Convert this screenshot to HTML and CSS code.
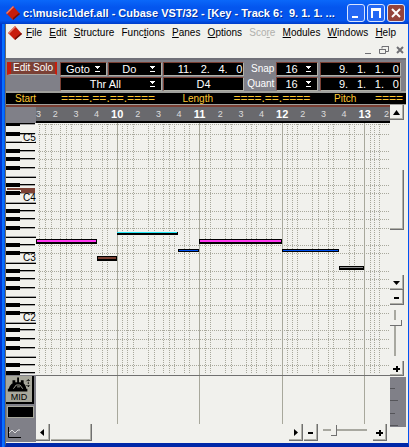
FILE: index.html
```
<!DOCTYPE html>
<html lang="en">
<head>
    <meta charset="UTF-8">
    <meta name="viewport" content="width=device-width, initial-scale=1.0">
    <title>Cubase VST/32</title>
    <link rel="stylesheet" href="styles.css">
</head>
<body>
    <div class="window">
        <header class="titlebar">
            <svg class="logo" viewBox="0 0 14 14"><path d="M7 0L14 8L7 14L0 7Z" fill="#c81c0c"/><path d="M0 7L7 0L8 1L1 8Z" fill="#e88070"/><path d="M7 14L14 8L13 7L7 12Z" fill="#701008"/></svg>
            <h1>c:\music1\def.all - Cubase VST/32 - [Key - Track 6:&nbsp; 9. 1. 1. ...</h1>
            <div class="caption">
                <button type="button" aria-label="Minimize"><svg viewBox="0 0 16 16"><path d="M4 11h6v2H4z" fill="#fff"/></svg></button>
                <button type="button" aria-label="Maximize"><svg viewBox="0 0 16 16"><path d="M3 3h10v10h-2V6H5v7H3z" fill="#fff"/></svg></button>
                <button type="button" class="close" aria-label="Close"><svg viewBox="0 0 16 16"><path d="M4 4L12 12M12 4L4 12" stroke="#fff" stroke-width="2"/></svg></button>
            </div>
        </header>

        <nav class="menu">
            <svg class="logo" viewBox="0 0 14 14"><path d="M7 0L14 8L7 14L0 7Z" fill="#c81c0c"/><path d="M0 7L7 0L8 1L1 8Z" fill="#e88070"/><path d="M7 14L14 8L13 7L7 12Z" fill="#701008"/></svg>
            <div class="items">
                <button type="button"><u>F</u>ile</button>
                <button type="button"><u>E</u>dit</button>
                <button type="button"><u>S</u>tructure</button>
                <button type="button">Func<u>t</u>ions</button>
                <button type="button"><u>P</u>anes</button>
                <button type="button"><u>O</u>ptions</button>
                <button type="button" disabled>Sco<u>r</u>e</button>
                <button type="button"><u>M</u>odules</button>
                <button type="button"><u>W</u>indows</button>
                <button type="button"><u>H</u>elp</button>
            </div>
        </nav>
        <div class="mdi">
            <button type="button" aria-label="Minimize document"><svg viewBox="0 0 10 10"><path d="M2 8h6v1H2z" fill="#707074"/></svg></button>
            <button type="button" aria-label="Restore document"><svg viewBox="0 0 10 10"><path d="M3 3.500V1.500H9.500V6.500H7M0.500 4.500H6.500V8.500H0.500Z" fill="none" stroke="#707074"/><path d="M3 1h7v1H3zM0 4h7v1H0z" fill="#707074"/></svg></button>
            <button type="button" aria-label="Close document"><svg viewBox="0 0 10 10"><path d="M2 2L8 8M8 2L2 8" stroke="#707074" stroke-width="2"/></svg></button>
        </div>

        <div class="toolbar">
            <button type="button" class="solo">Edit Solo</button>
            <div class="fields">
                <div class="pick"><select aria-label="Goto"><option>Goto</option></select><svg viewBox="0 0 5 6"><path d="M0 0h5v1H0zM1 1h3v1H1zM2 2h1v1H2zM0 5h5v1H0z" fill="#fff"/></svg></div>
                <div class="pick"><select aria-label="Do"><option>Do</option></select><svg viewBox="0 0 5 6"><path d="M0 0h5v1H0zM1 1h3v1H1zM2 2h1v1H2zM0 5h5v1H0z" fill="#fff"/></svg></div>
                <div class="pos"><span>11.</span><span>2.</span><span>4.</span><span>0</span></div>
                <div class="pick wide"><select aria-label="Target"><option>Thr All</option></select><svg viewBox="0 0 5 6"><path d="M0 0h5v1H0zM1 1h3v1H1zM2 2h1v1H2zM0 5h5v1H0z" fill="#fff"/></svg></div>
                <div class="pos note">D4</div>
            </div>
            <div class="quant">
                <label for="snap">Snap</label>
                <div class="pick"><select id="snap"><option>16</option></select><svg viewBox="0 0 5 6"><path d="M0 0h5v1H0zM1 1h3v1H1zM2 2h1v1H2zM0 5h5v1H0z" fill="#fff"/></svg></div>
                <div class="pos"><span>9.</span><span>1.</span><span>1.</span><span>0</span></div>
                <label for="quant">Quant</label>
                <div class="pick"><select id="quant"><option>16</option></select><svg viewBox="0 0 5 6"><path d="M0 0h5v1H0zM1 1h3v1H1zM2 2h1v1H2zM0 5h5v1H0z" fill="#fff"/></svg></div>
                <div class="pos"><span>9.</span><span>1.</span><span>1.</span><span>0</span></div>
            </div>
        </div>

        <div class="info">
            <span>Start</span><b>====.==.==.====</b>
            <span>Length</span><b>====.==.====</b>
            <span>Pitch</span><b>====</b>
        </div>

        <main class="editor">
            <aside class="left">
                <div class="corner"></div>
                <svg class="keys" id="keys" viewBox="0 0 30 252" preserveAspectRatio="none"></svg>
                <div class="tools">
                    <button type="button" class="ctrl" aria-label="Controller type">
                        <svg viewBox="0 0 28 16"><path d="M3 14C3 8 7 6 9 5H17C20 6 22 9 22 14Z" fill="#000"/><path d="M12 0h2v6h-2zM7 3h3v3H7zM16 3h3v3h-3zM2 12h21v3H2z" fill="#000"/><path d="M8 12L11 8H15L18 12M12 10h3" fill="none" stroke="#a8a89c"/><path d="M24 2v8M22 4l2-2 2 2M22 8l2 2 2-2" fill="none" stroke="#000" stroke-dasharray="2 1"/></svg>
                        <span>MID</span>
                    </button>
                    <div class="value"></div>
                    <svg class="graph" viewBox="0 0 14 11"><path d="M0.500 0V10.500H13" fill="none" stroke="#000"/><path d="M1 6L4 3L7 6L10 3H12" fill="none" stroke="#ddd"/></svg>
                </div>
            </aside>

            <section class="center">
                <div class="ruler">
                    <span>3</span><span>2</span><span>3</span><span>4</span><b>10</b><span>2</span><span>3</span><span>4</span><b>11</b><span>2</span><span>3</span><span>4</span><b>12</b><span>2</span><span>3</span><span>4</span><b>13</b><span>2</span>
                </div>
                <svg class="roll" id="roll" viewBox="0 0 354 301" preserveAspectRatio="none"></svg>
                <div class="hscroll">
                    <button type="button" class="bevel" aria-label="Scroll left"><svg viewBox="0 0 9 9"><path d="M6 1V8L2 4.500Z"/></svg></button>
                    <div class="thumb"></div>
                    <button type="button" class="bevel" aria-label="Scroll right"><svg viewBox="0 0 9 9"><path d="M3 1V8L7 4.500Z"/></svg></button>
                    <button type="button" class="bevel" aria-label="Zoom out"><svg viewBox="0 0 9 9"><path d="M2 4h5v2H2z"/></svg></button>
                    <input type="range" class="hzoom" aria-label="Horizontal zoom" min="0" max="100" value="22">
                    <button type="button" class="bevel" aria-label="Zoom in"><svg viewBox="0 0 9 9"><path d="M1 4h7v2H1zM4 2h2v6H4z"/></svg></button>
                </div>
            </section>

            <aside class="right">
                <button type="button" class="bevel" aria-label="Scroll up"><svg viewBox="0 0 9 9"><path d="M1 7H8L4.500 2Z"/></svg></button>
                <div class="vtrack"><div class="thumb"></div></div>
                <button type="button" class="bevel" aria-label="Scroll down"><svg viewBox="0 0 9 9"><path d="M1 3H8L4.500 7Z"/></svg></button>
                <button type="button" class="bevel" aria-label="Zoom out"><svg viewBox="0 0 9 9"><path d="M2 4h5v2H2z"/></svg></button>
                <input type="range" class="vzoom" aria-label="Vertical zoom" min="0" max="100" value="26">
                <button type="button" class="bevel" aria-label="Zoom in"><svg viewBox="0 0 9 9"><path d="M1 4h7v2H1zM4 2h2v6H4z"/></svg></button>
                <div class="scale"><i></i><i></i><i></i><i></i></div>
            </aside>
        </main>
    </div>
    <script src="script.js"></script>
</body>
</html>
```
FILE: styles.css
```
*{
    box-sizing: border-box;
}
body{
    margin: 0;
    font-family: "Liberation Sans", Arial, sans-serif;
    font-size: 10px;
    background-color: #f1f1ed;
}
button{
    margin: 0;
    padding: 0;
    border: 0;
    background: none;
    font: inherit;
    color: inherit;
}
h1{
    margin: 0;
}
svg{
    display: block;
}
.window{
    min-height: 100vh;
    display: flex;
    flex-direction: column;
    border-left: 1px solid #6c6c64;
    border-right: 1px solid #0054f0;
    border-bottom: 4px solid #0028a8;
    margin-left: 5px;
    padding-right: 2px;
    background-color: #f1f1ed;
    box-shadow: -1px 0 #0058f0, -3px 0 #0870ff, -5px 0 #0034d0;
}
.titlebar{
    height: 24px;
    margin: 0 -3px 0 -6px;
    padding: 2px 4px 0 6px;
    display: flex;
    align-items: center;
    gap: 3px;
    background: linear-gradient(#0a68fa, #0456ee 30%, #0456ee 85%, #003cc8);
    color: #fff;
}
.titlebar h1{
    flex: 1;
    font-size: 11px;
    line-height: 14px;
    white-space: nowrap;
    overflow: hidden;
    text-shadow: 1px 1px #0030a0;
}
.logo{
    width: 14px;
    height: 14px;
    flex: none;
}
.caption{
    display: flex;
    gap: 2px;
}
.caption button{
    width: 18px;
    height: 18px;
    border: 1px solid #d8e4ff;
    border-radius: 3px;
    background-color: #2468f4;
}
.caption .close{
    background-color: #94443c;
}
.menu{
    height: 17px;
    padding: 1px 10px 0 2px;
    display: flex;
    align-items: center;
    gap: 4px;
}
.items{
    flex: 1;
    display: flex;
    justify-content: space-between;
}
.menu button{
    color: #000;
    line-height: 14px;
}
.menu button:disabled{
    color: #b0b0ac;
}
.mdi{
    height: 17px;
    padding-right: 1px;
    display: flex;
    align-items: center;
    justify-content: flex-end;
    gap: 6px;
}
.mdi svg{
    width: 10px;
    height: 10px;
}
.toolbar{
    height: 33px;
    padding: 2px 5px 1px 1px;
    border-top: 2px solid #707078;
    display: flex;
    gap: 2px;
    background-color: #808088;
    color: #fff;
}
.solo{
    width: 50px;
    height: 13px;
    margin-right: 1px;
    line-height: 12px;
    border-left: 4px solid #c81c0c;
    border-right: 2px solid #c81c0c;
    border-bottom: 1px solid #a8a8a4;
    background-color: #7b4034;
    white-space: nowrap;
}
.fields, .quant{
    display: grid;
    gap: 1px;
}
.fields{
    flex: 186;
    grid-template-columns: 47fr 54fr 82fr;
}
.quant{
    flex: 156;
    grid-template-columns: 28px 43fr 84fr;
    column-gap: 2px;
}
.quant label{
    font-size: 10px;
    line-height: 14px;
    text-align: right;
}
.wide{
    grid-column: span 2;
}
.pick, .pos{
    height: 14px;
    border-top: 1px solid #7b4034;
    border-left: 1px solid #7b4034;
    border-right: 1px solid #b0b0a8;
    border-bottom: 1px solid #b0b0a8;
    background-color: #000;
    font-size: 11px;
    line-height: 12px;
}
.pick{
    display: grid;
    grid-template-columns: 1fr 11px;
    align-items: center;
}
.pick select{
    grid-area: 1 / 1 / 2 / 3;
    width: 100%;
    height: 12px;
    padding: 0 11px 0 0;
    border: 0;
    appearance: none;
    background: none;
    color: #fff;
    font: inherit;
    text-align: center;
    text-align-last: center;
}
.pick svg{
    grid-area: 1 / 2;
    width: 5px;
    height: 6px;
    pointer-events: none;
}
.pos{
    padding: 0 1px 0 14px;
    display: flex;
    justify-content: space-between;
}
.quant .pos{
    padding-left: 18px;
}
.note{
    padding: 0;
    justify-content: center;
}
.info{
    height: 14px;
    padding: 0 3px 0 9px;
    border-top: 2px solid #a0a09c;
    border-bottom: 1px solid #a0a09c;
    display: grid;
    grid-template-columns: 46px 122fr 51px 101fr 41px 28px;
    background-color: #000;
    color: #ffc832;
    line-height: 12px;
}
.info b{
    font-size: 12px;
    line-height: 11px;
    font-weight: normal;
}
.info b:last-child{
    text-align: right;
}
.editor{
    flex: 1;
    display: grid;
    grid-template-columns: 30px 1fr 16px;
}
.left, .center, .right{
    display: flex;
    flex-direction: column;
}
.corner{
    height: 18px;
    border-top: 2px solid #7b4034;
    background-color: #808088;
}
.keys{
    width: 30px;
    height: 252px;
    font-size: 10px;
}
.tools{
    height: 67px;
    padding: 1px 2px 0 0;
    background-color: #808088;
}
.ctrl{
    width: 28px;
    height: 28px;
    border-right: 2px solid #000;
    border-bottom: 2px solid #000;
    background-color: #a8a89c;
    color: #000;
    font-size: 9px;
    line-height: 9px;
}
.ctrl svg{
    width: 26px;
    height: 16px;
}
.ctrl span{
    display: block;
}
.value{
    height: 12px;
    margin: 2px 0 9px 1px;
    border: 1px solid #a8a89c;
    background-color: #000;
}
.graph{
    width: 14px;
    height: 11px;
    margin-left: 2px;
}
.ruler{
    height: 18px;
    border-top: 2px solid #7b4034;
    border-bottom: 2px solid #000;
    display: grid;
    grid-template-columns: 9px repeat(16, minmax(0, 1fr)) 15px;
    justify-items: center;
    background-color: #69696d;
    color: #ddd;
    font-size: 9px;
    line-height: 15px;
}
.ruler b{
    font-size: 11px;
    color: #fff;
}
.ruler span:first-child{
    justify-self: start;
}
.ruler span:last-child{
    justify-self: end;
    margin-right: 1px;
}
.roll{
    width: 100%;
    height: 301px;
}
.hscroll{
    height: 18px;
    padding-right: 3px;
    display: flex;
    gap: 1px;
}
.hscroll .thumb{
    width: 41px;
    margin-right: auto;
}
.bevel, .thumb{
    border-right: 1px solid #707070;
    border-bottom: 1px solid #707070;
    box-shadow: inset -1px -1px #b0b0a8;
    background-color: #f1f1ed;
}
.bevel{
    width: 14px;
    height: 15px;
    flex: none;
    display: flex;
    align-items: center;
    justify-content: center;
}
.bevel svg{
    width: 9px;
    height: 9px;
}
.hscroll .bevel, .hscroll .thumb{
    height: 17px;
}
.vtrack{
    height: 155px;
    padding-top: 50px;
}
.vtrack .thumb{
    width: 14px;
    height: 60px;
}
input{
    appearance: none;
    background: none;
}
input::-webkit-slider-runnable-track{
    background-color: #a8a8a0;
}
input::-webkit-slider-thumb{
    appearance: none;
    border-right: 1px solid #707070;
    border-bottom: 1px solid #707070;
    background-color: #f1f1ed;
}
.hzoom{
    width: 44px;
    height: 12px;
    margin: 0 5px 0 4px;
}
.hzoom::-webkit-slider-runnable-track{
    height: 2px;
}
.hzoom::-webkit-slider-thumb{
    width: 6px;
    height: 11px;
    margin-top: -4px;
}
.vzoom{
    writing-mode: vertical-lr;
    width: 10px;
    height: 46px;
    margin: 5px 0;
}
.vzoom::-webkit-slider-runnable-track{
    width: 2px;
}
.vzoom::-webkit-slider-thumb{
    width: 12px;
    height: 6px;
    margin-left: -4px;
}
.scale{
    height: 50px;
    margin-top: 1px;
    padding: 11px 0 1px;
    display: flex;
    flex-direction: column;
    justify-content: space-between;
    background-color: #808088;
}
.scale i{
    width: 5px;
    height: 1px;
    background-color: #55555a;
}
.scale i:nth-child(even){
    width: 8px;
}
```
FILE: script.js
```
var NS = 'http://www.w3.org/2000/svg';

function rect(parent, x, y, w, h, color){
    var r = document.createElementNS(NS, 'rect');
    r.setAttribute('x', x);
    r.setAttribute('y', y);
    r.setAttribute('width', w);
    r.setAttribute('height', h);
    r.setAttribute('fill', color);
    parent.appendChild(r);
}

function dots(parent, d){
    var p = document.createElementNS(NS, 'path');
    p.setAttribute('d', d);
    p.setAttribute('stroke', '#a8a89c');
    p.setAttribute('stroke-dasharray', '1 1');
    parent.appendChild(p);
}

// rows of the black keys, shared by keyboard and grid
var black = [1, 11, 28, 36, 45, 62, 70, 88, 96, 105, 122, 130, 148, 156, 165, 182, 190, 207, 216, 225, 242, 250];

var keys = document.getElementById('keys');
rect(keys, 0, 0, 30, 252, '#f1f1ed');
black.forEach(function(y){
    rect(keys, 0, y - 2, 14, 4, '#000');
    rect(keys, 14, y - 1, 15, 1, '#000');
    rect(keys, 14, y, 15, 1, '#a0a0a0');
});
[19, 54, 80, 114, 140, 174, 200, 234].forEach(function(y){
    rect(keys, 0, y - 1, 30, 1, '#a0a0a0');
    rect(keys, 0, y, 30, 1, '#000');
});
// key under the cursor
rect(keys, 1, 65, 28, 2, '#7b4034');
rect(keys, 15, 65, 14, 5, '#7b4034');
[['C5', 19], ['C4', 79], ['C3', 139], ['C2', 199]].forEach(function(l){
    rect(keys, 16, l[1] - 7, 13, 7, '#f1f1ed');
    var t = document.createElementNS(NS, 'text');
    t.setAttribute('x', 17);
    t.setAttribute('y', l[1] - 1);
    t.textContent = l[0];
    keys.appendChild(t);
});

var roll = document.getElementById('roll');
rect(roll, 0, 0, 354, 301, '#f1f1ed');
[3, 9, 15, 24, 30, 35, 45, 55, 66, 71, 86, 91, 97, 112, 118, 127, 133, 138, 148, 153, 169, 174, 189, 195, 210, 215, 220, 230, 235, 251, 256, 261, 276, 282, 292, 297, 313, 318, 334, 338, 343].forEach(function(x){
    dots(roll, 'M' + (x + 0.5) + ' 1V251');
});
black.slice(0, -1).forEach(function(y){
    dots(roll, 'M2 ' + (y + 0.5) + 'H354');
});
[81, 163, 246, 328].forEach(function(x){
    rect(roll, x, 0, 1, 301, '#a8a89c');
});
rect(roll, 0, 252, 354, 1, '#707070');

// x, y, width, height, color
[
    [0, 116, 61, 5, '#ff38f0'],
    [61, 133, 20, 5, '#7b4034'],
    [81, 109, 61, 3, '#20e8f8'],
    [142, 126, 21, 3, '#0050f0'],
    [163, 116, 83, 5, '#ff38f0'],
    [246, 126, 57, 3, '#0050f0'],
    [303, 143, 25, 4, '#909090']
].forEach(function(n){
    rect(roll, n[0], n[1], n[2], n[3], '#000');
    if(n[4] == '#20e8f8'){
        rect(roll, n[0], n[1], n[2] - 1, 1, n[4]);
    }else{
        rect(roll, n[0] + 1, n[1] + 1, n[2] - 2, n[3] > 4 ? 2 : 1, n[4]);
    }
});
```
